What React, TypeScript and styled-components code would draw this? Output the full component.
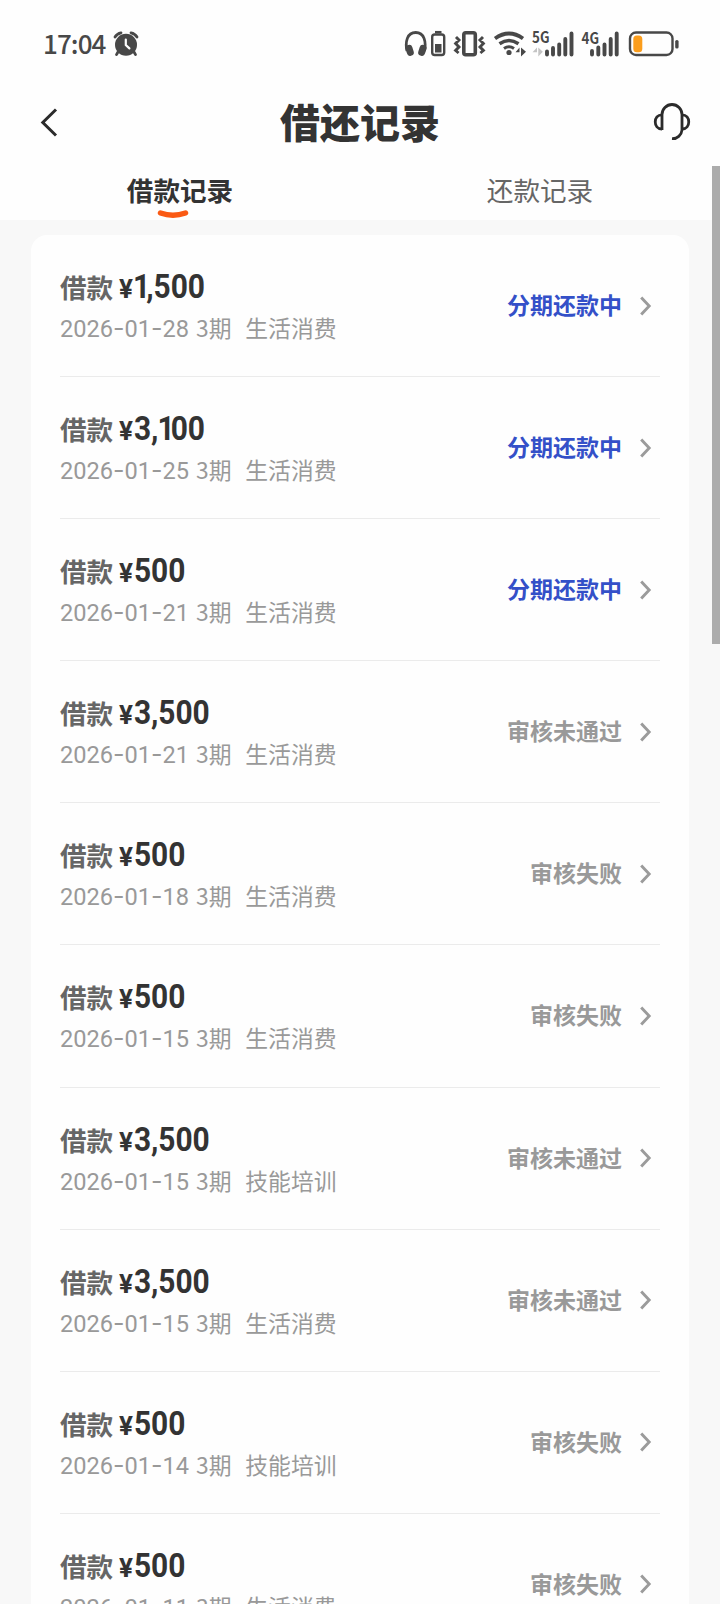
import React from "react";
import styled, { createGlobalStyle } from "styled-components";

const GlobalStyle = createGlobalStyle`
  * { box-sizing: border-box; }
  body {
    margin: 0;
    background: #f8f8f8;
    font-family: "Noto Sans CJK SC", sans-serif;
  }
`;

const Page = styled.div`
  position: relative;
  display: flex;
  flex-direction: column;
  width: 720px;
  height: 1604px;
  overflow: hidden;
  background: #f8f8f8;
`;

const StatusBar = styled.header`
  display: flex;
  flex: none;
  align-items: center;
  height: 88px;
  padding: 0 40px 0 43px;
  background: #fefefe;
`;

const Clock = styled.span`
  width: 70px;
  padding-bottom: 2px;
  font-size: 26px;
  line-height: 30px;
  font-weight: 500;
  letter-spacing: -0.9px;
  color: #484848;
  white-space: nowrap;
`;

const StatusIcons = styled.svg`
  flex: none;
  margin-left: auto;
`;

const TitleBar = styled.div`
  display: grid;
  grid-template-columns: 80px 1fr 80px;
  flex: none;
  align-items: center;
  height: 70px;
  background: #fefefe;
`;

const Title = styled.h1`
  margin: 0;
  padding-bottom: 4px;
  font-size: 40px;
  line-height: 60px;
  font-weight: 900;
  text-align: center;
  color: #333;
`;

const Tabs = styled.nav`
  display: grid;
  grid-template-columns: 1fr 1fr;
  flex: none;
  height: 62px;
  background: #fefefe;
`;

const Tab = styled.div<{ $active?: boolean }>`
  display: flex;
  flex-direction: column;
  align-items: center;
  padding-top: 12px;
  font-size: 26.6px;
  line-height: 40px;
  font-weight: ${(p) => (p.$active ? 700 : 400)};
  color: ${(p) => (p.$active ? "#333" : "#666")};
`;

const Underline = styled.svg`
  flex: none;
  margin: 0 14px 0 0;
`;

const Card = styled.main`
  flex: none;
  margin: 15px 31px 0;
  padding: 0 29px;
  border-radius: 16px;
  background: #fefefe;
`;

const Row = styled.section`
  display: flex;
  justify-content: space-between;
  height: 142.1px;
  border-bottom: 1px solid #ebebeb;
`;

const Info = styled.div`
  display: flex;
  flex-direction: column;
  gap: 2px;
  padding-top: 30px;
`;

const Headline = styled.div`
  display: flex;
  align-items: baseline;
  height: 42px;
  line-height: 42px;
  white-space: nowrap;
`;

const Kind = styled.span`
  width: 59px;
  font-size: 26.6px;
  font-weight: 700;
  color: #666;
`;

const Currency = styled.span`
  width: 14.5px;
  font-family: Roboto, sans-serif;
  font-size: 26px;
  font-weight: 700;
  letter-spacing: -1px;
  color: #333;
`;

const Amount = styled.span`
  font-family: Roboto, sans-serif;
  font-size: 34px;
  font-weight: 700;
  letter-spacing: -0.1px;
  color: #333;
  transform: scaleX(0.88);
  transform-origin: left;
`;

const NarrowDigit = styled.span`
  margin-left: -1px;
  letter-spacing: -4.5px;
`;

const Detail = styled.div`
  display: flex;
  align-items: baseline;
  height: 38px;
  line-height: 38px;
  font-size: 22.8px;
  color: #999;
  white-space: nowrap;
`;

const DateText = styled.span`
  width: 136px;
  font-family: Roboto, sans-serif;
  font-size: 23.6px;
`;

const Dash = styled.span`
  font-family: Inter, sans-serif;
  font-size: 25px;
`;

const Term = styled.span`
  width: 49.3px;
`;

const Status = styled.div<{ $active: boolean }>`
  display: flex;
  align-items: center;
  gap: 18px;
  height: 40px;
  margin: 49px 8px 0 0;
  font-size: 23px;
  font-weight: 700;
  color: ${(p) => (p.$active ? "#3450c8" : "#999")};
`;

const ChevronSvg = styled.svg`
  flex: none;
  margin-top: 3px;
`;

const Scrollbar = styled.div`
  position: absolute;
  top: 166px;
  right: 0;
  width: 8px;
  height: 478px;
  background: #acacac;
`;

const AlarmIcon = () => (
  <svg width="26" height="26" viewBox="0 0 26 26">
    <circle cx="13" cy="13.8" r="11" fill="#484848" />
    <path d="M2 6Q4 2.500 8 1.800M24 6Q22 2.500 18 1.800M5 21l-1.500 2.600M21 21l1.500 2.600" fill="none" stroke="#484848" strokeWidth="2.800" strokeLinecap="round" />
    <path d="M12.800 8.500v5.500l3.600 3.400" fill="none" stroke="#fefefe" strokeWidth="2.200" strokeLinecap="round" />
  </svg>
);

const SystemIcons = () => (
  <StatusIcons width="276" height="54" viewBox="404 17 276 54" fill="none" stroke="#484848">
    <path d="M407 51c-2-9 0-18.500 8.700-18.500s10.700 9.500 8.700 18.500" strokeWidth="2.800" />
    <rect x="406" y="45" width="7" height="11" rx="3.200" fill="#484848" stroke="none" transform="rotate(-18 409 50)" />
    <rect x="419" y="45" width="7" height="11" rx="3.200" fill="#484848" stroke="none" transform="rotate(18 423 50)" />
    <rect x="432.200" y="34.500" width="12" height="20.500" rx="2.500" strokeWidth="2.400" />
    <path d="M435 32.200h6.500" strokeWidth="2.500" />
    <rect x="435" y="44" width="6.500" height="8.500" fill="#484848" stroke="none" />
    <rect x="463.800" y="32.800" width="11.500" height="22" rx="2" strokeWidth="3.600" />
    <path d="M456 37l3 3-3.400 3.500 3.400 3.500-3.400 3.500 3 2.500M483 37l-3 3 3.400 3.500-3.400 3.500 3.400 3.500-3 2.500" strokeWidth="2.900" />
    <path d="M495 38.500q14-10 28 0" strokeWidth="3.800" />
    <path d="M499.500 43.700q9.500-6.500 19 0" strokeWidth="3.500" />
    <path d="M504 48.500q5-3.500 10 0" strokeWidth="3" />
    <circle cx="509" cy="52.500" r="2.600" fill="#484848" stroke="none" />
    <path d="M519.500 56.500v-9l-4 4.800h4zM521 47.500v9l5-4.800z" fill="#484848" stroke="none" />
    <path d="M537 56.500v-9l-4.500 4.800h4.500zM538.300 47.500v9l4.500-4.800z" fill="#c4c4c4" stroke="none" />
    <g strokeWidth="3.900" strokeLinecap="round">
      <path d="M547 51.500v3M553 48v6.500M559.200 44.500v10M565.300 39v15.500M571.500 33.500v21" />
      <path d="M592 51v3.500M598.300 47.500v7M604.500 44.500v10M610.700 39v15.500M616.700 33.500v21" />
    </g>
    <g fill="#484848" stroke="none" fontFamily="Noto Sans CJK SC" fontWeight="700" fontSize="15.500">
      <text x="532" y="43" textLength="17.500" lengthAdjust="spacingAndGlyphs">5G</text>
      <text x="581.500" y="43.500" textLength="17.500" lengthAdjust="spacingAndGlyphs">4G</text>
    </g>
    <rect x="630" y="32.500" width="42.500" height="22.500" rx="6" strokeWidth="2.400" />
    <rect x="633.300" y="35.500" width="9" height="16.700" rx="3.500" fill="#fb9d1c" stroke="none" />
    <rect x="675.200" y="40" width="3.400" height="8.500" rx="1.600" fill="#484848" stroke="none" />
  </StatusIcons>
);

const BackIcon = () => (
  <svg width="80" height="70" viewBox="0 88 80 70" fill="none" stroke="#2b2b2b" strokeWidth="3">
    <path d="M56 109.500L42.800 122.500L56 135.500" />
  </svg>
);

const SupportIcon = () => (
  <svg width="80" height="70" viewBox="640 88 80 70" fill="none" stroke="#2b2b2b" strokeWidth="2.800">
    <path d="M662 130V114.500a10 10 0 0 1 20 0V130a9.500 9.500 0 0 1-10 8.700" strokeLinecap="butt" />
    <path d="M662 114.800c-9 0-9 14.200 0 14.200M682 114.800c9 0 9 14.200 0 14.200" />
  </svg>
);

const Chevron = () => (
  <ChevronSvg width="12" height="20" viewBox="0 0 12 20" fill="none" stroke="#9b9b9b" strokeWidth="2.900">
    <path d="M1.200 1.500L9.200 10L1.200 18.500" />
  </ChevronSvg>
);

type Loan = { amount: string; date: string; use: string; status: string };

const loans: Loan[] = [
  { amount: "1,500", date: "2026-01-28", use: "生活消费", status: "分期还款中" },
  { amount: "3,100", date: "2026-01-25", use: "生活消费", status: "分期还款中" },
  { amount: "500", date: "2026-01-21", use: "生活消费", status: "分期还款中" },
  { amount: "3,500", date: "2026-01-21", use: "生活消费", status: "审核未通过" },
  { amount: "500", date: "2026-01-18", use: "生活消费", status: "审核失败" },
  { amount: "500", date: "2026-01-15", use: "生活消费", status: "审核失败" },
  { amount: "3,500", date: "2026-01-15", use: "技能培训", status: "审核未通过" },
  { amount: "3,500", date: "2026-01-15", use: "生活消费", status: "审核未通过" },
  { amount: "500", date: "2026-01-14", use: "技能培训", status: "审核失败" },
  { amount: "500", date: "2026-01-11", use: "生活消费", status: "审核失败" },
];

const LoanRow = ({ loan }: { loan: Loan }) => {
  const [year, month, day] = loan.date.split("-");
  return (
    <Row>
      <Info>
        <Headline>
          <Kind>借款</Kind>
          <Currency>¥</Currency>
          <Amount>
            {loan.amount
              .split(/(1)/)
              .map((part, i) => (part === "1" ? <NarrowDigit key={i}>1</NarrowDigit> : part))}
          </Amount>
        </Headline>
        <Detail>
          <DateText>
            {year}<Dash>-</Dash>{month}<Dash>-</Dash>{day}
          </DateText>
          <Term>3期</Term>
          <span>{loan.use}</span>
        </Detail>
      </Info>
      <Status $active={loan.status === "分期还款中"}>
        {loan.status}
        <Chevron />
      </Status>
    </Row>
  );
};

export default function App() {
  return (
    <Page>
      <GlobalStyle />
      <StatusBar>
        <Clock>17:04</Clock>
        <AlarmIcon />
        <SystemIcons />
      </StatusBar>
      <TitleBar>
        <BackIcon />
        <Title>借还记录</Title>
        <SupportIcon />
      </TitleBar>
      <Tabs>
        <Tab $active>
          借款记录
          <Underline width="32" height="10" viewBox="0 0 32 10" fill="none" stroke="#fa5a14" strokeWidth="5.500" strokeLinecap="round">
            <path d="M3.500 3Q16 7.500 28.500 3" />
          </Underline>
        </Tab>
        <Tab>还款记录</Tab>
      </Tabs>
      <Card>
        {loans.map((loan, i) => (
          <LoanRow key={i} loan={loan} />
        ))}
      </Card>
      <Scrollbar />
    </Page>
  );
}
